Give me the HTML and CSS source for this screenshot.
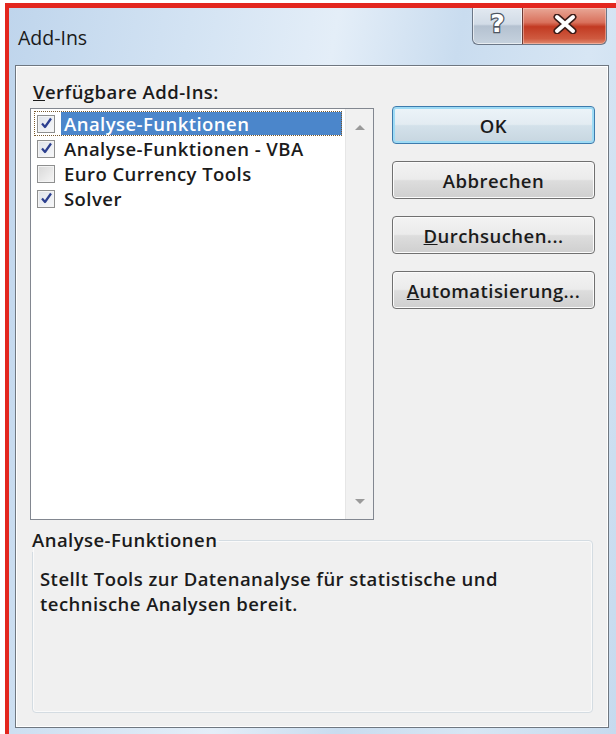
FILE: index.html
```html
<!DOCTYPE html>
<html lang="de">
<head>
<meta charset="utf-8">
<title>Add-Ins</title>
<link rel="stylesheet" href="styles.css">
</head>
<body>
<div class="screen">
  <div class="window">
    <div class="titlebar">
      <span class="title">Add-Ins</span>
      <div class="caption-buttons">
        <div class="cap help"><span class="help-glyph">?</span></div>
        <div class="cap close">
          <svg width="26" height="20" viewBox="0 0 26 20">
            <path d="M5 3 L21 17 M21 3 L5 17" stroke="#3b1c18" stroke-width="7" stroke-linecap="round" fill="none"/>
            <path d="M5 3 L21 17 M21 3 L5 17" stroke="#ffffff" stroke-width="4" stroke-linecap="round" fill="none"/>
          </svg>
        </div>
      </div>
    </div>

    <div class="panel">
      <div class="top-row">
        <div class="list-col">
          <div class="label"><u>V</u>erfügbare Add-Ins:</div>
          <div class="listbox">
            <ul class="items">
              <li class="item focused">
                <span class="check on"><svg viewBox="0 0 13 13" width="13" height="13"><path d="M2 6.5 L5 10 L11 1.5" stroke="#2c3f8f" stroke-width="2.2" fill="none" stroke-linejoin="round"/></svg></span>
                <span class="text selected">Analyse-Funktionen</span>
              </li>
              <li class="item">
                <span class="check on"><svg viewBox="0 0 13 13" width="13" height="13"><path d="M2 6.5 L5 10 L11 1.5" stroke="#2c3f8f" stroke-width="2.2" fill="none" stroke-linejoin="round"/></svg></span>
                <span class="text">Analyse-Funktionen - VBA</span>
              </li>
              <li class="item">
                <span class="check"></span>
                <span class="text">Euro Currency Tools</span>
              </li>
              <li class="item">
                <span class="check on"><svg viewBox="0 0 13 13" width="13" height="13"><path d="M2 6.5 L5 10 L11 1.5" stroke="#2c3f8f" stroke-width="2.2" fill="none" stroke-linejoin="round"/></svg></span>
                <span class="text">Solver</span>
              </li>
            </ul>
            <div class="scrollbar">
              <span class="arrow up"></span>
              <span class="arrow down"></span>
            </div>
          </div>
        </div>

        <div class="buttons">
          <button class="btn default">OK</button>
          <button class="btn">Abbrechen</button>
          <button class="btn"><u>D</u>urchsuchen...</button>
          <button class="btn"><u>A</u>utomatisierung...</button>
        </div>
      </div>

      <fieldset class="group">
        <legend>Analyse-Funktionen</legend>
        <p>Stellt Tools zur Datenanalyse für statistische und<br>technische Analysen bereit.</p>
      </fieldset>
    </div>
  </div>
</div>
</body>
</html>
```

FILE: styles.css
```css
* {
  box-sizing: border-box;
}

html, body {
  margin: 0;
  padding: 0;
  background: #ffffff;
}

body {
  width: 616px;
  height: 734px;
  overflow: hidden;
  font-family: "Open Sans", "Noto Sans", sans-serif;
  color: #1b1b1b;
}

.screen {
  width: 616px;
  height: 734px;
  padding: 3px 0 0 5px;
}

/* Aero window frame with the red marker lines on top and left */
.window {
  width: 611px;
  height: 731px;
  border-top: 5px solid #e3261e;
  border-left: 4px solid #e3261e;
  background: linear-gradient(100deg, #bfd5ec 0%, #d3e3f3 25%, #e4eef8 45%, #c9dcef 62%, #d7e6f4 80%, #c6daee 100%);
  display: flex;
  flex-direction: column;
}

.titlebar {
  height: 57px;
  flex: none;
  display: flex;
  align-items: flex-start;
  justify-content: space-between;
  padding-left: 9px;
}

.title {
  font-size: 19.5px;
  line-height: 24px;
  margin-top: 18px;
  color: #1a1a1a;
}

.caption-buttons {
  display: flex;
  margin-right: 9px;
}

.cap {
  height: 37px;
  display: flex;
  align-items: center;
  justify-content: center;
  border: 1px solid #6b7787;
  border-top: none;
}

.help {
  width: 50px;
  border-bottom-left-radius: 6px;
  border-right: none;
  background: linear-gradient(#e2e9f1 0%, #d1dbe6 45%, #b4c1d0 50%, #c6d2de 100%);
  box-shadow: inset 0 0 0 1px rgba(255,255,255,0.6);
}

.help-glyph {
  font-family: "DejaVu Sans", sans-serif;
  font-weight: bold;
  font-size: 25px;
  line-height: 1;
  color: #ffffff;
  -webkit-text-stroke: 2.5px #4d5662;
  paint-order: stroke fill;
  margin-top: -5px;
}

.close {
  width: 85px;
  border-bottom-right-radius: 6px;
  border-left: 1px solid #6b3b35;
  background: linear-gradient(#e8a796 0%, #d9715c 40%, #c23a22 52%, #cf5a40 85%, #e28a6f 100%);
  box-shadow: inset 0 0 0 1px rgba(255,220,210,0.45);
}

.close svg {
  margin-top: -4px;
}

/* dialog client area */
.panel {
  flex: 1;
  margin: 0 7px 6px 6px;
  background: #f0f0f0;
  border: 1px solid #6f7780;
  box-shadow: inset 0 0 0 1px #ffffff;
  padding: 14px 14px 14px 14px;
  display: flex;
  flex-direction: column;
  font-size: 18.5px;
  letter-spacing: 0.45px;
  font-weight: 600;
}

.top-row {
  display: flex;
  gap: 18px;
}

.list-col {
  display: flex;
  flex-direction: column;
  gap: 4px;
}

.label {
  line-height: 24px;
  padding-left: 3px;
}

.listbox {
  width: 344px;
  height: 412px;
  border: 1px solid #828790;
  background: #ffffff;
  display: flex;
  padding: 2px 1px 1px 3px;
}

.items {
  list-style: none;
  margin: 0;
  padding: 0;
  flex: 1;
}

.item {
  height: 25px;
  display: flex;
  align-items: center;
  gap: 6px;
  padding-left: 3px;
}

.item.focused {
  outline: 1px dotted #7a5a2e;
  outline-offset: -1px;
  margin-right: 1px;
}

.check {
  width: 18px;
  height: 18px;
  flex: none;
  border: 1px solid #8e8f8f;
  background: linear-gradient(135deg, #d8d8d8, #f6f6f6);
  box-shadow: inset 0 0 0 1px #f4f4f4;
  display: flex;
  align-items: center;
  justify-content: center;
}

.check.on {
  background: linear-gradient(135deg, #dfe3ea, #f7f8fa);
}

.text {
  line-height: 23px;
  padding: 0 3px 0 3px;
  white-space: nowrap;
}

.text.selected {
  flex: 1;
  background: #4b86cb;
  color: #ffffff;
  height: 23px;
}

.scrollbar {
  width: 28px;
  flex: none;
  margin: -2px -1px -1px 2px;
  background: #f1f1f1;
  border-left: 1px solid #e6e6e6;
  display: flex;
  flex-direction: column;
  justify-content: space-between;
  align-items: center;
  padding: 16px 0 15px;
}

.arrow {
  width: 0;
  height: 0;
  border-left: 5px solid transparent;
  border-right: 5px solid transparent;
}

.arrow.up {
  border-bottom: 5px solid #9a9a9a;
}

.arrow.down {
  border-top: 5px solid #9a9a9a;
}

.buttons {
  display: flex;
  flex-direction: column;
  gap: 17px;
  margin-top: 26px;
}

.btn {
  width: 203px;
  height: 38px;
  font-family: inherit;
  font-size: 18.5px;
  letter-spacing: 0.45px;
  font-weight: 600;
  color: #1b1b1b;
  border: 1px solid #707070;
  border-radius: 4px;
  background: linear-gradient(#f3f3f3 0%, #ebebeb 48%, #dddddd 52%, #cfcfcf 100%);
  box-shadow: inset 0 0 0 1px #fbfbfb;
  padding: 0;
}

.btn.default {
  border-color: #3d7bad;
  box-shadow: inset 0 0 0 2px #9edbf5;
  background: linear-gradient(#ecf4f9 0%, #e3ecf2 48%, #d3e1ea 52%, #c7d6e0 100%);
}

.group {
  margin: 8px 1px 0 2px;
  height: 185px;
  border: 1px solid #d4dce2;
  border-radius: 4px;
  box-shadow: inset 0 0 0 1px #fafafa;
  padding: 0 7px;
}

.group legend {
  padding: 0 2px 0 0;
  margin-left: -8px;
  line-height: 24px;
}

.group p {
  margin: 14px 0 0 0;
  line-height: 25px;
}
```
